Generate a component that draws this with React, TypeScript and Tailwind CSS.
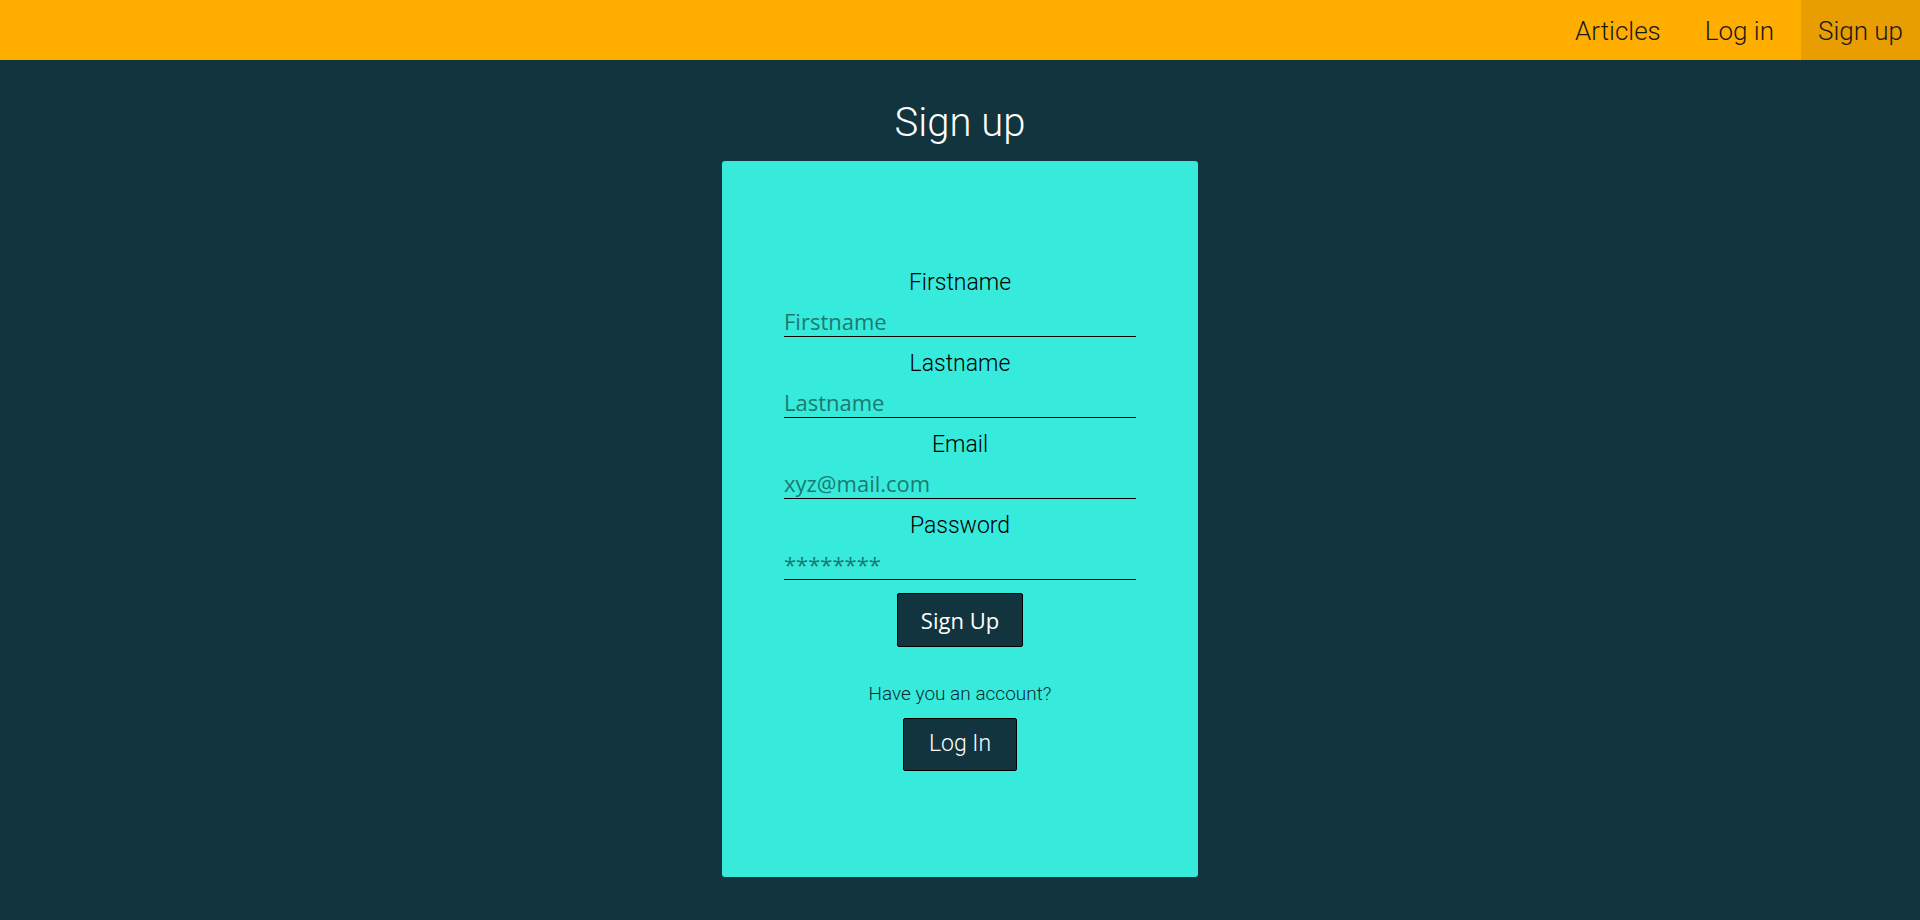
import React from "react";

type Field = {
    label: string,
    name: string,
    type: string,
    placeholder: string
}

const fields: Field[] = [
    {label: 'Firstname', name: 'firstname', type: 'text', placeholder: 'Firstname'},
    {label: 'Lastname', name: 'lastname', type: 'text', placeholder: 'Lastname'},
    {label: 'Email', name: 'email', type: 'email', placeholder: 'xyz@mail.com'},
    {label: 'Password', name: 'password', type: 'password', placeholder: '********'},
];

const navItems = [
    {title: 'Articles', active: false},
    {title: 'Log in', active: false},
    {title: 'Sign up', active: true},
];

const NavBar = () => {
    return (
        <nav className="h-[60px] bg-[#ffae00] flex justify-end gap-[10px] font-['Roboto',sans-serif]">
            {navItems.map(item => (
                <a
                    key={item.title}
                    href="#"
                    className={(item.active ? "bg-[#e89e00] " : "") + "flex items-center px-[17px] pt-[2px] text-[26px] font-light text-[#1a1a1a]"}
                >
                    {item.title}
                </a>
            ))}
        </nav>
    );
}

const SignUpForm = () => {
    return (
        <div className="w-[476px] h-[716px] mx-auto mt-[14px] bg-[#37ebdc] rounded-[3px] flex flex-col items-center justify-center">
            <form className="w-[352px] flex flex-col items-center" onSubmit={e => e.preventDefault()}>
                {fields.map(f => (
                    <div key={f.name} className="w-full flex flex-col mb-[11px]">
                        <label htmlFor={f.name} className="text-center text-[23px] leading-[32px] font-light text-black">
                            {f.label}
                        </label>
                        <input
                            id={f.name}
                            name={f.name}
                            type={f.type}
                            placeholder={f.placeholder}
                            className="w-full h-[38px] pt-[6px] bg-transparent border-b border-black outline-none text-[22px] font-['Open_Sans',sans-serif] placeholder:text-[#1b7a70]"
                        />
                    </div>
                ))}
                <button
                    type="submit"
                    className="h-[54px] px-[23px] mt-[2px] bg-[#11343e] border border-black rounded-[2px] text-white text-[22px] font-['Open_Sans',sans-serif]"
                >
                    Sign Up
                </button>
            </form>
            <p className="mt-[35px] text-[19px] leading-[24px] font-light text-[#0d2b30]">Have you an account?</p>
            <a
                href="#"
                className="mt-[12px] h-[53px] px-[25px] flex items-center bg-[#11343e] border border-black rounded-[2px] text-white text-[23px] font-light"
            >
                Log In
            </a>
        </div>
    );
}

export default function App() {
    return (
        <div className="min-h-screen bg-[#11343e] font-['Roboto',sans-serif]">
            <NavBar/>
            <main>
                <h1 className="mt-[39px] text-center text-white text-[40px] leading-[48px] font-light">Sign up</h1>
                <SignUpForm/>
            </main>
        </div>
    );
}
